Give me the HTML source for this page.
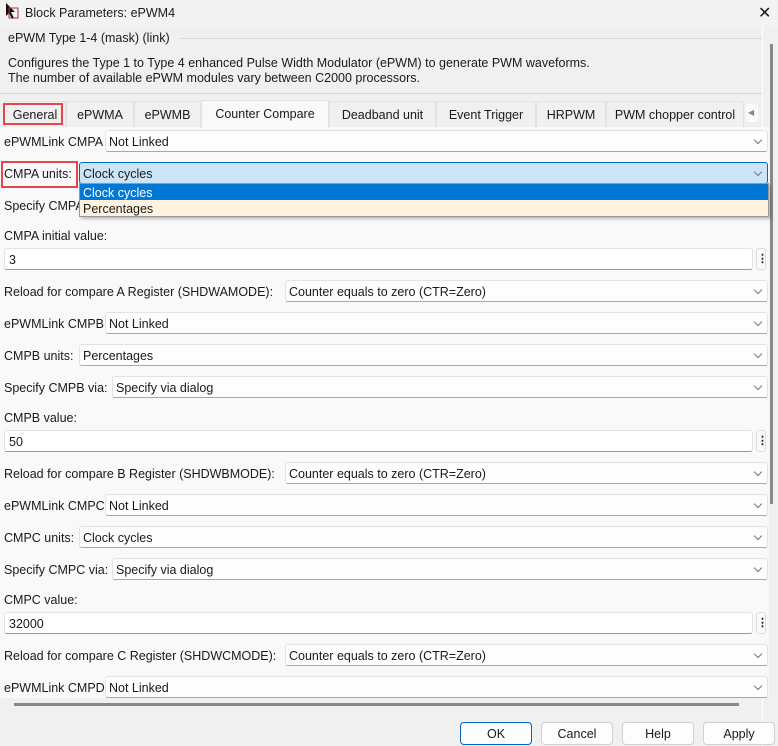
<!DOCTYPE html>
<html><head><style>
*{box-sizing:border-box;margin:0;padding:0}
body{width:778px;height:746px;overflow:hidden;background:#f0f0f0;font-family:"Liberation Sans",sans-serif;font-size:12.5px;color:#1a1a1a;position:relative}
.a{position:absolute;white-space:nowrap}
.dd{position:absolute;height:22px;background:#fdfdfd;border:1px solid #e3e3e3;border-bottom-color:#a8a8a8;border-radius:3px;padding:4px 0 0 3px;right:10px}
.dd:after{content:"";position:absolute;right:6px;top:6px;width:5px;height:5px;border-right:1px solid #777;border-bottom:1px solid #777;transform:rotate(45deg)}
.ed{position:absolute;left:4px;width:749px;height:22px;background:#fff;border:1px solid #e3e3e3;border-bottom-color:#9a9a9a;border-radius:3px;padding:4px 0 0 4px}
.dots{position:absolute;left:756px;width:10px;height:22px;border:1px solid #ddd;border-radius:3px;background:#fafafa;font-weight:bold;font-size:11px;text-align:center;line-height:20px}
.tab{position:absolute;top:101px;height:26px;background:#f0f0f0;border:1px solid #e2e2e2;border-bottom:none;text-align:center;padding-top:6px}
.btn{position:absolute;top:722px;width:72px;height:23px;background:#fdfdfd;border:1px solid #d0d0d0;border-radius:4px;text-align:center;padding-top:4px}
.lbl{position:absolute;left:4px;margin-top:1px}
</style></head><body>
<div class="a" style="left:0;top:0;width:778px;height:27px;background:#f3f3f3"></div>
<svg class="a" style="left:4px;top:2px" width="16" height="18"><path d="M2 1 L2 14 L5 11 L8 17 L10 16 L7 10 L11 10 Z" fill="#111"/><rect x="5" y="6" width="9" height="10" fill="none" stroke="#a33" stroke-width="1"/></svg>
<div class="a" style="left:25px;top:6px">Block Parameters: ePWM4</div>
<div class="a" style="left:758px;top:3px;font-size:16px">✕</div>
<div class="a" style="left:8px;top:31px">ePWM Type 1-4 (mask) (link)</div>
<div class="a" style="left:180px;top:38px;width:582px;border-top:1px solid #d8d8d8"></div>
<div class="a" style="left:8px;top:56px;line-height:15px">Configures the Type 1 to Type 4 enhanced Pulse Width Modulator (ePWM) to generate PWM waveforms.<br>The number of available ePWM modules vary between C2000 processors.</div>
<div class="a" style="left:0;top:93px;width:762px;border-top:1px solid #d8d8d8"></div>
<div class="a" style="left:762px;top:27px;width:16px;height:719px;background:#f0f0f0;border-left:1px solid #fff"></div>
<div class="a" style="left:770px;top:44px;width:3px;height:460px;background:#888"></div>
<div class="a" style="left:0;top:127px;width:769px;height:571px;background:#f9f9f9"></div>
<div class="tab" style="left:4px;width:62px">General</div>
<div class="tab" style="left:66px;width:68px">ePWMA</div>
<div class="tab" style="left:134px;width:67px">ePWMB</div>
<div class="tab" style="left:201px;width:128px;background:#f9f9f9;top:100px;height:28px">Counter Compare</div>
<div class="tab" style="left:329px;width:107px">Deadband unit</div>
<div class="tab" style="left:436px;width:100px">Event Trigger</div>
<div class="tab" style="left:536px;width:70px">HRPWM</div>
<div class="tab" style="left:606px;width:138px">PWM chopper control</div>
<div class="a" style="left:746px;top:104px;width:12px;height:18px;background:#fafafa;font-size:8px;color:#888;padding:4px 0 0 2px">◀</div>
<div class="a" style="left:3px;top:103px;width:60px;height:22px;border:2px solid #e5454d"></div>

<div class="lbl" style="top:134px">ePWMLink CMPA</div><div class="dd" style="left:105px;top:130px">Not Linked</div>
<div class="lbl" style="top:166px">CMPA units:</div><div class="a" style="left:1px;top:161px;width:77px;height:27px;border:2px solid #e5454d"></div>
<div class="dd" style="left:79px;top:162px;background:#cce4f7;border:1px solid #0067c0;border-bottom-width:1px">Clock cycles</div>
<div class="lbl" style="top:198px">Specify CMPA via:</div>
<div class="a" style="left:79px;top:183px;width:690px;height:34px;border:1px solid #999;box-shadow:2px 2px 3px rgba(0,0,0,.25)"></div>
<div class="a" style="left:80px;top:184px;width:688px;height:16px;background:#0078d4;color:#fff;padding:2px 0 0 3px">Clock cycles</div>
<div class="a" style="left:80px;top:200px;width:688px;height:16px;background:#fff3e0;padding:2px 0 0 3px">Percentages</div>
<div class="lbl" style="top:228px">CMPA initial value:</div>
<div class="ed" style="top:248px">3</div><div class="dots" style="top:248px">⋮</div>
<div class="lbl" style="top:284px">Reload for compare A Register (SHDWAMODE):</div><div class="dd" style="left:285px;top:280px">Counter equals to zero (CTR=Zero)</div>
<div class="lbl" style="top:316px">ePWMLink CMPB</div><div class="dd" style="left:105px;top:312px">Not Linked</div>
<div class="lbl" style="top:348px">CMPB units:</div><div class="dd" style="left:79px;top:344px">Percentages</div>
<div class="lbl" style="top:380px">Specify CMPB via:</div><div class="dd" style="left:112px;top:376px">Specify via dialog</div>
<div class="lbl" style="top:410px">CMPB value:</div>
<div class="ed" style="top:430px">50</div><div class="dots" style="top:430px">⋮</div>
<div class="lbl" style="top:466px">Reload for compare B Register (SHDWBMODE):</div><div class="dd" style="left:285px;top:462px">Counter equals to zero (CTR=Zero)</div>
<div class="lbl" style="top:498px">ePWMLink CMPC</div><div class="dd" style="left:105px;top:494px">Not Linked</div>
<div class="lbl" style="top:530px">CMPC units:</div><div class="dd" style="left:79px;top:526px">Clock cycles</div>
<div class="lbl" style="top:562px">Specify CMPC via:</div><div class="dd" style="left:112px;top:558px">Specify via dialog</div>
<div class="lbl" style="top:592px">CMPC value:</div>
<div class="ed" style="top:612px">32000</div><div class="dots" style="top:612px">⋮</div>
<div class="lbl" style="top:648px">Reload for compare C Register (SHDWCMODE):</div><div class="dd" style="left:285px;top:644px">Counter equals to zero (CTR=Zero)</div>
<div class="lbl" style="top:680px">ePWMLink CMPD</div><div class="dd" style="left:105px;top:676px">Not Linked</div>
<div class="a" style="left:14px;top:703px;width:725px;height:3px;background:#8a8a8a"></div>
<div class="btn" style="left:460px;border:1px solid #0067c0">OK</div>
<div class="btn" style="left:541px">Cancel</div>
<div class="btn" style="left:622px">Help</div>
<div class="btn" style="left:703px">Apply</div>
</body></html>
